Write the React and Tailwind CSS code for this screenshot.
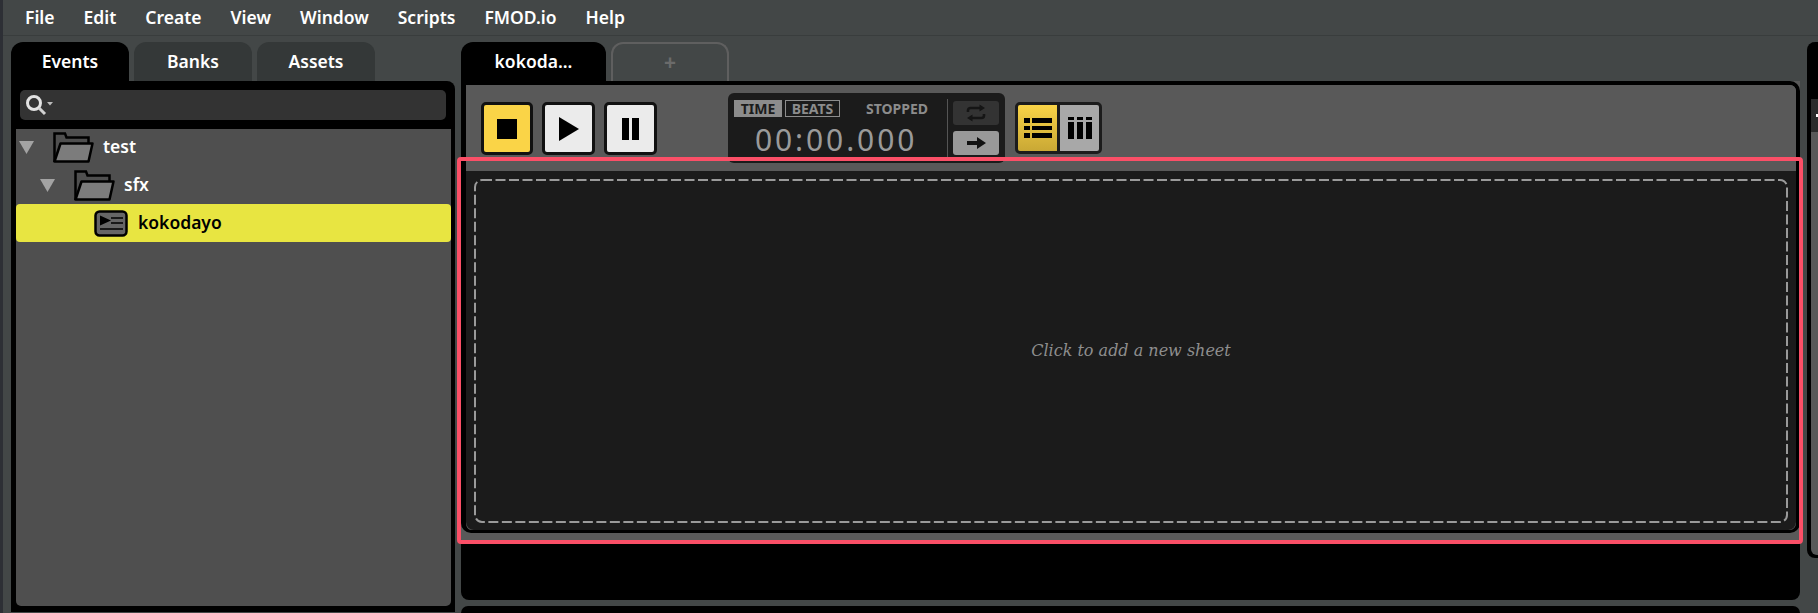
const sans = { fontFamily: '"Noto Sans", sans-serif' };

const menuItems = ['File', 'Edit', 'Create', 'View', 'Window', 'Scripts', 'FMOD.io', 'Help'];

function Triangle() {
  return (
    <svg width="15" height="13" viewBox="0 0 15 13" className="shrink-0">
      <path d="M0 0H15L7.5 13Z" fill="#a3a3a3" />
    </svg>
  );
}

function Folder() {
  return (
    <svg width="41" height="31" viewBox="0 0 41 31" className="shrink-0">
      <path d="M1.5 30V1.5H12L13.5 5.5H35.5V11" fill="none" stroke="#000" strokeWidth="2.5" />
      <path d="M7.5 11.5H39.5L35.5 29.5H1.5Z" fill="#7c7c7c" stroke="#000" strokeWidth="2.5" strokeLinejoin="round" />
    </svg>
  );
}

function EventIcon() {
  return (
    <svg width="34" height="27" viewBox="0 0 34 27" className="shrink-0">
      <rect x="1.5" y="1.5" width="31" height="24" rx="4" fill="#666" stroke="#000" strokeWidth="2.5" />
      <path d="M6 5.5L17 10.5L6 15.5Z" fill="#000" />
      <path d="M17 8H29M17 13H29M6 19H29" stroke="#000" strokeWidth="1.6" />
    </svg>
  );
}

function TreeRow({ children, indent, height, className = '' }) {
  return (
    <div className={`flex items-center ${height} ${className}`} style={{ paddingLeft: indent }}>
      {children}
    </div>
  );
}

function TransportButton({ yellow, children, className = '' }) {
  return (
    <div
      className={`flex h-[53px] items-center justify-center rounded-[5px] border-[3px] border-[#111] ${
        yellow ? 'bg-[#fad447]' : 'bg-[#ebebeb]'
      } ${className}`}
    >
      {children}
    </div>
  );
}

export default function App() {
  return (
    <div className="flex h-[613px] w-[1818px] overflow-hidden bg-[#434747] text-white" style={sans}>
      <div className="w-[3px] shrink-0 bg-[#2d2f35]" />
      <div className="relative flex min-w-0 flex-1 flex-col">
        <div className="flex h-[36px] shrink-0 items-center gap-[29px] border-b border-[#393d3d] pl-[22px] text-[17.5px] font-semibold">
          {menuItems.map((item) => (
            <span key={item} className="leading-none">{item}</span>
          ))}
        </div>

        <div className="flex min-h-0 flex-1 pl-[8px] pt-[6px]">
          {/* events browser */}
          <div className="flex w-[444px] shrink-0 flex-col pb-[1px]">
            <div className="flex h-[39px] shrink-0 gap-[5px] text-[17.5px] font-semibold">
              <div className="flex w-[118px] items-center justify-center rounded-t-[12px] bg-black">Events</div>
              <div className="flex w-[118px] items-center justify-center rounded-t-[12px] bg-[#343838]">Banks</div>
              <div className="flex w-[118px] items-center justify-center rounded-t-[12px] bg-[#343838]">Assets</div>
            </div>
            <div className="flex min-h-0 flex-1 flex-col rounded-tr-[8px] bg-black pb-[6px] pl-[5px] pr-[4px]">
              <div className="flex h-[48px] shrink-0 pl-[4px] pr-[5px] pt-[9px]">
                <div className="flex h-[30px] w-full items-center rounded-[5px] bg-[#333] pl-[4px]">
                  <svg width="32" height="24" viewBox="0 0 32 24">
                    <circle cx="10" cy="10" r="6.5" fill="none" stroke="#e2e2e2" strokeWidth="3" />
                    <path d="M15 15L21 21" stroke="#d0d0d0" strokeWidth="3" />
                    <path d="M23 9H29L26 12.5Z" fill="#bbb" />
                  </svg>
                </div>
              </div>
              <div className="min-h-0 flex-1 rounded-b-[5px] bg-[#4f4f4f] text-[17.5px] font-semibold">
                <TreeRow indent={3} height="h-[37px]">
                  <Triangle />
                  <span className="ml-[19px]"><Folder /></span>
                  <span className="ml-[9px] -translate-y-px">test</span>
                </TreeRow>
                <TreeRow indent={24} height="h-[38px]">
                  <Triangle />
                  <span className="ml-[19px]"><Folder /></span>
                  <span className="ml-[9px] -translate-y-px">sfx</span>
                </TreeRow>
                <TreeRow indent={78} height="h-[38px]" className="rounded-[4px] bg-[#e8e541] text-black">
                  <EventIcon />
                  <span className="ml-[10px] -translate-y-px">kokodayo</span>
                </TreeRow>
              </div>
            </div>
          </div>

          {/* event editor */}
          <div className="ml-[6px] flex w-[1339px] shrink-0 flex-col">
            <div className="flex h-[39px] shrink-0 gap-[5px] text-[17.5px] font-semibold">
              <div className="flex w-[145px] items-center justify-center rounded-t-[12px] bg-black">kokoda...</div>
              <div className="flex w-[118px] items-center justify-center rounded-t-[12px] border-x-2 border-t-2 border-[#5f5f5f] text-[21px] font-bold text-[#6b6b6b]">+</div>
            </div>
            <div className="shrink-0 rounded-b-[4px] bg-[#595959] pb-[10px]">
              <div className="overflow-hidden rounded-[10px] rounded-tl-none border-b-[3px] border-l-[5px] border-r-[4px] border-t-[4px] border-black">
                <div className="flex h-[86px] items-start bg-[#595959] pl-[15px] pt-[17px]">
                  <TransportButton yellow className="w-[52px]">
                    <div className="h-[20px] w-[20px] bg-black" />
                  </TransportButton>
                  <TransportButton className="ml-[9px] w-[53px]">
                    <svg width="20" height="24" viewBox="0 0 20 24"><path d="M0 0L20 12L0 24Z" fill="#000" /></svg>
                  </TransportButton>
                  <TransportButton className="ml-[9px] w-[53px]">
                    <div className="flex gap-[3px]">
                      <div className="h-[22px] w-[7px] bg-black" />
                      <div className="h-[22px] w-[7px] bg-black" />
                    </div>
                  </TransportButton>

                  <div className="-mt-[9px] ml-[71px] flex h-[70px] w-[277px] rounded-[6px] bg-[#1b1b1b]">
                    <div className="w-[219px] shrink-0 pl-[6px] pt-[7px]">
                      <div className="flex h-[17px] items-center text-[14px] font-bold leading-none">
                        <div className="flex h-[17px] w-[48px] items-center justify-center bg-[#8c8c8c] text-[#1b1b1b]">TIME</div>
                        <div className="ml-[3px] flex h-[17px] w-[55px] items-center justify-center border border-[#8c8c8c] text-[#8c8c8c]">BEATS</div>
                        <div className="ml-[26px] text-[#8c8c8c]">STOPPED</div>
                      </div>
                      <div className="mt-[5px] pl-[21px] text-[30px] leading-[36px] tracking-[2.9px] text-[#9a9a9a]">00:00.000</div>
                    </div>
                    <div className="my-[6px] w-px bg-[#555]" />
                    <div className="flex flex-col gap-[6px] pl-[5px] pt-[8px]">
                      <div className="flex h-[24px] w-[46px] items-center justify-center rounded-[3px] bg-[#333]">
                        <svg width="20" height="18" viewBox="0 0 20 18" fill="none">
                          <path d="M2 8V6.5C2 5 3 4 4.5 4H15" stroke="#151515" strokeWidth="2.6" />
                          <path d="M13.5 0.5L19 4L13.5 7.5Z" fill="#151515" />
                          <path d="M18 10V11.5C18 13 17 14 15.5 14H5" stroke="#151515" strokeWidth="2.6" />
                          <path d="M6.5 10.5L1 14L6.5 17.5Z" fill="#151515" />
                        </svg>
                      </div>
                      <div className="flex h-[24px] w-[46px] items-center justify-center rounded-[3px] bg-[#999]">
                        <svg width="19" height="12" viewBox="0 0 19 12"><path d="M0 4H10V0L19 6L10 12V8H0Z" fill="#111" /></svg>
                      </div>
                    </div>
                  </div>

                  <div className="ml-[10px] flex h-[52px] w-[87px] overflow-hidden rounded-[5px] border-[3px] border-[#1c1c1c] bg-[#1c1c1c]">
                    <div className="flex w-[39px] items-center justify-center bg-gradient-to-b from-[#fad447] to-[#c9a835]">
                      <svg width="28" height="20" viewBox="0 0 28 20">
                        <path d="M0 0H6V5H0ZM8 0H28V5H8ZM0 8H6V12H0ZM8 8H28V12H8ZM0 15H6V20H0ZM8 15H28V20H8Z" fill="#000" />
                      </svg>
                    </div>
                    <div className="ml-[3px] flex w-[39px] items-center justify-center bg-[#a8a8a8]">
                      <svg width="24" height="22" viewBox="0 0 24 22">
                        <path d="M0 0H6V3H0ZM0 5H6V22H0ZM9 0H15V3H9ZM9 5H15V22H9ZM18 0H24V3H18ZM18 5H24V22H18Z" fill="#000" />
                      </svg>
                    </div>
                  </div>
                </div>

                <div className="relative flex h-[359px] items-center justify-center rounded-b-[8px] bg-[#1b1b1b]">
                  <svg className="absolute left-[8px] top-[8px]" width="1314" height="344" fill="none">
                    <rect x="1" y="1" width="1312" height="342" rx="7" stroke="#9a9a9a" strokeWidth="2" strokeDasharray="10 3.5" />
                  </svg>
                  <span className="text-[16px] italic text-[#8e8e8e]" style={{ fontFamily: '"DejaVu Serif", serif' }}>
                    Click to add a new sheet
                  </span>
                </div>
              </div>
            </div>
            <div className="h-[57px] shrink-0 rounded-b-[8px] bg-black" />
            <div className="mt-[6px] min-h-0 flex-1 rounded-t-[8px] bg-black" />
          </div>

          {/* deck, cut off by the window edge */}
          <div className="ml-[7px] flex min-w-0 flex-1 flex-col pb-[16px]">
            <div className="flex h-[516px] flex-col rounded-l-[8px] border-b-[3px] border-l-[4px] border-black bg-black pt-[57px]">
              <div className="flex h-[33px] shrink-0 items-center justify-end bg-[#2b2b2b]">
                <div className="h-[3px] w-[2px] bg-white" />
              </div>
              <div className="flex-1 rounded-bl-[6px] bg-[#595959]" />
            </div>
          </div>
        </div>

        {/* highlight drawn over the screenshot */}
        <div className="pointer-events-none absolute left-[454px] top-[157px] h-[387px] w-[1346px] rounded-[4px] border-4 border-[#fb4f67]" />
      </div>
    </div>
  );
}
